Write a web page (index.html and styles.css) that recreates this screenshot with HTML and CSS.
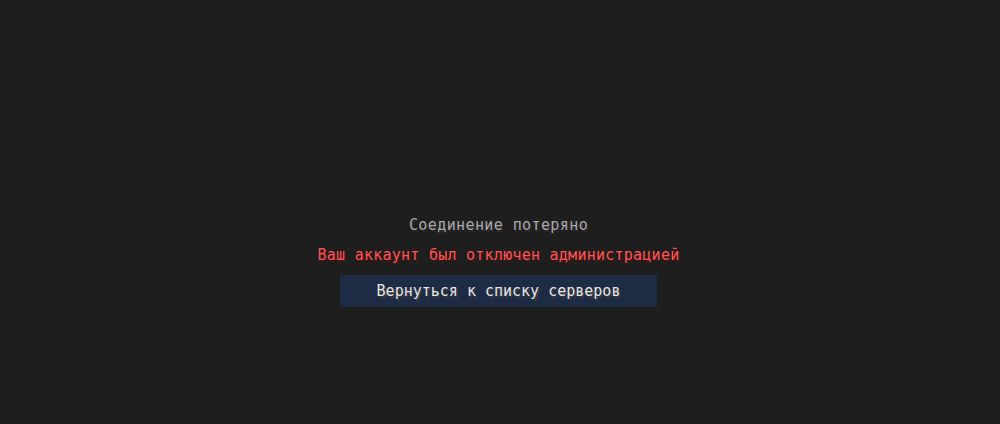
FILE: index.html
```html
<!DOCTYPE html>
<html lang="ru">
<head>
<meta charset="utf-8">
<title>Соединение потеряно</title>
<link rel="stylesheet" href="styles.css">
</head>
<body>
<main class="screen">
  <h1 class="title">Соединение потеряно</h1>
  <p class="reason">Ваш аккаунт был отключен администрацией</p>
  <button class="back-btn" type="button">Вернуться к списку серверов</button>
</main>
</body>
</html>
```
FILE: styles.css
```css
html, body {
  margin: 0;
  padding: 0;
  background: #1e1e1e;
}
body {
  width: 1000px;
  height: 424px;
  overflow: hidden;
  font-family: "DejaVu Sans Mono", "Liberation Mono", monospace;
}
.screen {
  display: flex;
  flex-direction: column;
  align-items: center;
  padding-top: 216px;
  padding-right: 3px;
}
.title {
  margin: 0;
  font-size: 15px;
  font-weight: normal;
  line-height: 18px;
  letter-spacing: 0.4px;
  color: #a9a9a9;
  text-shadow: 1.5px 1.5px 0 #2a2a2a;
}
.reason {
  margin: 11.5px 0 0;
  font-size: 15px;
  line-height: 18px;
  letter-spacing: 0.25px;
  color: #ff5555;
  text-shadow: 1.5px 1.5px 0 #3f1515;
}
.back-btn {
  margin-top: 11.5px;
  width: 317px;
  height: 32px;
  padding: 0;
  border: 0;
  background: #1d2b45;
  font-family: "DejaVu Sans Mono", "Liberation Mono", monospace;
  font-size: 15px;
  line-height: 32px;
  letter-spacing: 0;
  color: #e6e6e6;
  text-shadow: 1.5px 1.5px 0 #3a3a3a;
}
```
